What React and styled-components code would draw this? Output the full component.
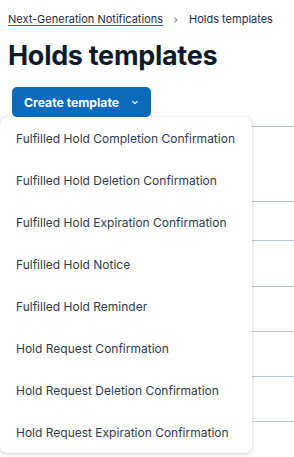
import styled, { createGlobalStyle } from 'styled-components';

const GlobalStyle = createGlobalStyle`
  body {
    margin: 0;
    background: #ffffff;
    font-family: Inter, "Noto Sans", sans-serif;
    overflow: hidden;
  }
`;

const templates = [
  'Fulfilled Hold Completion Confirmation',
  'Fulfilled Hold Deletion Confirmation',
  'Fulfilled Hold Expiration Confirmation',
  'Fulfilled Hold Notice',
  'Fulfilled Hold Reminder',
  'Hold Request Confirmation',
  'Hold Request Deletion Confirmation',
  'Hold Request Expiration Confirmation',
];

const rowHeights = [75, 39, 46, 45, 45, 45, 45];

function App() {
  return (
    <>
      <GlobalStyle />
      <Page>
        <Breadcrumbs>
          <CrumbLink href="#">Next-Generation Notifications</CrumbLink>
          <Separator viewBox="0 0 8 8">
            <path d="M2.5 1.5 L5 4 L2.5 6.5" />
          </Separator>
          <Current>Holds templates</Current>
        </Breadcrumbs>

        <Title>Holds templates</Title>

        <Toolbar>
          <DropdownWrap>
            <CreateButton type="button">
              Create template
              <Caret viewBox="0 0 10 10">
                <path d="M2 3.5 L5 6.5 L8 3.5" />
              </Caret>
            </CreateButton>
            <Menu role="menu">
              {templates.map((name) => (
                <MenuItem key={name} role="menuitem">
                  {name}
                </MenuItem>
              ))}
            </Menu>
          </DropdownWrap>
        </Toolbar>

        <Table>
          {rowHeights.map((h, i) => (
            <Row key={i} style={{ height: h }} />
          ))}
        </Table>
        <Panel />
      </Page>
    </>
  );
}

const Page = styled.main`
  padding: 12px 0 0 8px;
  height: 457px;
  box-sizing: border-box;
  overflow: hidden;
`;

const Breadcrumbs = styled.nav`
  display: flex;
  align-items: center;
  gap: 9px;
  font-size: 11px;
  line-height: 15px;
  color: #1d2939;
  white-space: nowrap;
`;

const CrumbLink = styled.a`
  color: #1d2939;
  text-decoration: underline;
  text-decoration-color: #1f6fc0;
  text-underline-offset: 2px;
`;

const Separator = styled.svg`
  width: 8px;
  height: 8px;
  fill: none;
  stroke: #8a939e;
  stroke-width: 1.2;
`;

const Current = styled.span`
  color: #1d2939;
`;

const Title = styled.h1`
  margin: 13px 0 0;
  font-size: 27px;
  line-height: 32px;
  font-weight: 700;
  color: #0f1b2a;
  letter-spacing: -0.3px;
  white-space: nowrap;
`;

const Toolbar = styled.div`
  display: flex;
  padding: 15px 0 0 4px;
`;

const DropdownWrap = styled.div`
  position: relative;
`;

const CreateButton = styled.button`
  display: flex;
  align-items: center;
  gap: 12px;
  height: 30px;
  width: 139px;
  padding: 0 12px;
  border: none;
  border-radius: 5px;
  background: #0a6abc;
  color: #ffffff;
  font-family: Inter, "Noto Sans", sans-serif;
  font-size: 12.2px;
  font-weight: 700;
  white-space: nowrap;
  cursor: pointer;
`;

const Caret = styled.svg`
  width: 11px;
  height: 11px;
  fill: none;
  stroke: #ffffff;
  stroke-width: 1.5;
  stroke-linecap: round;
  stroke-linejoin: round;
`;

const Menu = styled.ul`
  position: absolute;
  top: 30px;
  left: -12px;
  z-index: 2;
  width: 252px;
  margin: 0;
  padding: 0;
  list-style: none;
  background: #ffffff;
  border-radius: 7px;
  box-shadow: 0 1px 4px rgba(16, 24, 40, 0.18), 0 0 1px rgba(16, 24, 40, 0.2);
`;

const MenuItem = styled.li`
  display: flex;
  align-items: center;
  height: 42px;
  padding: 0 16px;
  font-size: 12px;
  color: #2e3a4b;
  white-space: nowrap;
`;

const Table = styled.div`
  margin-top: 9px;
  display: flex;
  flex-direction: column;
  border-top: 1px solid #b9c9d8;
`;

const Row = styled.div`
  box-sizing: border-box;
  border-bottom: 1px solid #b9c9d8;
`;

const Panel = styled.div`
  margin: 30px 0 0 4px;
  height: 40px;
  border-left: 1px solid #b9c9d8;
`;

export default App;
